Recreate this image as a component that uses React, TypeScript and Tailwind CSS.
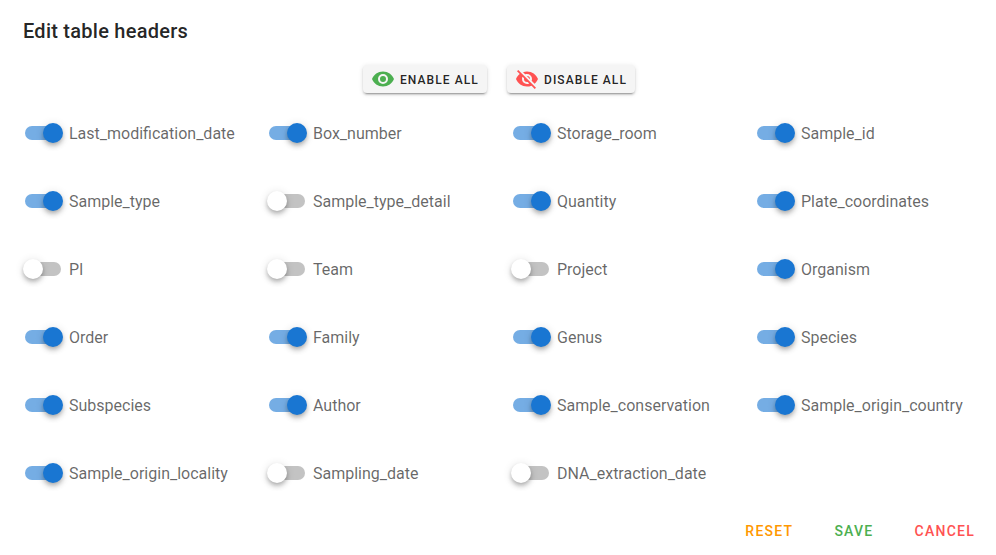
import React from "react";

const headers: [string, boolean][] = [
  ["Last_modification_date", true], ["Box_number", true], ["Storage_room", true], ["Sample_id", true],
  ["Sample_type", true], ["Sample_type_detail", false], ["Quantity", true], ["Plate_coordinates", true],
  ["PI", false], ["Team", false], ["Project", false], ["Organism", true],
  ["Order", true], ["Family", true], ["Genus", true], ["Species", true],
  ["Subspecies", true], ["Author", true], ["Sample_conservation", true], ["Sample_origin_country", true],
  ["Sample_origin_locality", true], ["Sampling_date", false], ["DNA_extraction_date", false],
];

const EYE = "M12,9A3,3 0 0,0 9,12A3,3 0 0,0 12,15A3,3 0 0,0 15,12A3,3 0 0,0 12,9M12,17A5,5 0 0,1 7,12A5,5 0 0,1 12,7A5,5 0 0,1 17,12A5,5 0 0,1 12,17M12,4.5C7,4.5 2.73,7.61 1,12C2.73,16.39 7,19.5 12,19.5C17,19.5 21.27,16.39 23,12C21.27,7.61 17,4.5 12,4.5Z";
const EYE_OFF = "M11.83,9L15,12.16C15,12.11 15,12.05 15,12A3,3 0 0,0 12,9C11.94,9 11.89,9 11.83,9M7.53,9.8L9.08,11.35C9.03,11.56 9,11.77 9,12A3,3 0 0,0 12,15C12.22,15 12.44,14.97 12.65,14.92L14.2,16.47C13.53,16.8 12.79,17 12,17A5,5 0 0,1 7,12C7,11.21 7.2,10.47 7.53,9.8M2,4.27L4.28,6.55L4.73,7C3.08,8.3 1.78,10 1,12C2.73,16.39 7,19.5 12,19.5C13.55,19.5 15.03,19.2 16.38,18.66L16.81,19.08L19.73,22L21,20.73L3.27,3M12,7A5,5 0 0,1 17,12C17,12.64 16.87,13.26 16.64,13.82L19.57,16.75C21.07,15.5 22.27,13.86 23,12C21.27,7.61 17,4.5 12,4.5C10.6,4.5 9.26,4.75 8,5.2L10.17,7.35C10.74,7.13 11.35,7 12,7Z";

function BulkButton({ label, icon, color, width }: { label: string; icon: string; color: string; width: string }) {
  return (
    <button className={`flex h-7 items-center rounded bg-[#f5f5f5] pl-2 text-[12px] font-medium tracking-[1.07px] whitespace-nowrap text-black/87 shadow-[0_3px_1px_-2px_rgba(0,0,0,.2),0_2px_2px_0_rgba(0,0,0,.14),0_1px_5px_0_rgba(0,0,0,.12)] ${width}`}>
      <svg viewBox="0 0 24 24" className={`mr-[5px] size-6 shrink-0 ${color}`} fill="currentColor"><path d={icon} /></svg>
      <span className="pt-px">{label}</span>
    </button>
  );
}

function Toggle({ label, on }: { label: string; on: boolean }) {
  return (
    <div role="switch" aria-checked={on} className="flex h-6 items-center">
      <div className={`ml-[2px] flex h-[14px] w-9 shrink-0 items-center rounded-full ${on ? "justify-end bg-[#1976d2]/60" : "justify-start bg-[#c3c3c3]"}`}>
        <div className={`size-5 shrink-0 rounded-full shadow-[0_2px_4px_-1px_rgba(0,0,0,.2),0_4px_5px_0_rgba(0,0,0,.14),0_1px_10px_0_rgba(0,0,0,.12)] ${on ? "-mr-[2px] bg-[#1976d2]" : "-ml-[2px] bg-white"}`} />
      </div>
      <span className="ml-2 pt-0.5 text-base leading-5 whitespace-nowrap text-black/60">{label}</span>
    </div>
  );
}

export default function App() {
  return (
    <main className="flex h-[555px] w-[996px] flex-col overflow-hidden bg-white font-[Roboto,sans-serif]">
      <h1 className="mt-[15px] ml-[23px] text-xl leading-8 font-medium tracking-[.25px] text-black/87">Edit table headers</h1>
      <div className="mt-[18px] ml-[363px] flex gap-5">
        <BulkButton label="ENABLE ALL" icon={EYE} color="text-[#4caf50]" width="w-[124px]" />
        <BulkButton label="DISABLE ALL" icon={EYE_OFF} color="text-[#ff5252]" width="w-[128px]" />
      </div>
      <div className="mt-7 ml-[23px] grid grid-cols-[repeat(4,244px)] gap-y-11">
        {headers.map(([label, on]) => <Toggle key={label} label={label} on={on} />)}
      </div>
      <div className="mt-7 flex h-9 items-center justify-end gap-[41px] pr-[21px] text-sm font-medium tracking-[1.25px]">
        <button className="text-[#ff9800]">RESET</button>
        <button className="text-[#4caf50]">SAVE</button>
        <button className="text-[#ff5252]">CANCEL</button>
      </div>
    </main>
  );
}
